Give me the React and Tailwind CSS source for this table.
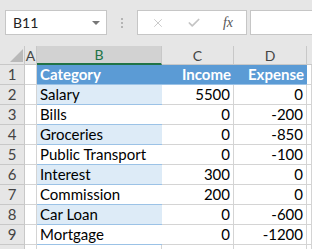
import React from 'react';
import { X, Check } from 'lucide-react';

const rows = [
    { name: 'Salary', income: 5500, expense: 0 },
    { name: 'Bills', income: 0, expense: -200 },
    { name: 'Groceries', income: 0, expense: -850 },
    { name: 'Public Transport', income: 0, expense: -100 },
    { name: 'Interest', income: 300, expense: 0 },
    { name: 'Commission', income: 200, expense: 0 },
    { name: 'Car Loan', income: 0, expense: -600 },
    { name: 'Mortgage', income: 0, expense: -1200 },
];

const cols = 'grid grid-cols-[25px_12px_125px_72px_73px_1fr]';
const cell = 'h-[20px] border-r border-b border-[#d4d4d4] bg-white';
const rowHead = 'h-[20px] border-r border-b border-[#c8c8c8] bg-[#e6e6e6] flex items-center justify-center text-[#444] text-[15px]';
const colHead = 'h-[19px] bg-[#e6e6e6] border-r border-b border-[#c8c8c8] flex items-center justify-center text-[14px] text-[#444]';

function FormulaBar() {
    return (
        <div className="h-[46px] bg-[#e6e6e6] flex items-start pt-[10px] pl-[5px]">
            <div className="w-[102px] h-[25px] bg-white border border-[#c6c6c6] flex items-center justify-between pl-[7px] pr-[6px]">
                <span className="text-[14px] text-[#222]">B11</span>
                <span className="w-0 h-0 border-l-[4px] border-r-[4px] border-t-[4px] border-l-transparent border-r-transparent border-t-[#777]"></span>
            </div>
            <div className="w-[30px] h-[25px] flex flex-col items-center justify-center gap-[2px]">
                <span className="w-[2px] h-[2px] bg-[#b4b4b4]"></span>
                <span className="w-[2px] h-[2px] bg-[#b4b4b4]"></span>
                <span className="w-[2px] h-[2px] bg-[#b4b4b4]"></span>
            </div>
            <div className="w-[110px] h-[25px] bg-white border border-[#c6c6c6] flex items-center justify-between pl-[13px] pr-[13px]">
                <X className="w-[14px] h-[14px] text-[#c4c4c4]" strokeWidth={1.5} />
                <Check className="w-[14px] h-[14px] text-[#c4c4c4]" strokeWidth={3} />
                <span className="text-[14px] italic text-[#555] font-['Liberation_Serif',serif] leading-none">fx</span>
            </div>
            <div className="ml-[3px] flex-1 h-[25px] bg-white border border-[#c6c6c6] border-r-0"></div>
        </div>
    );
}

function App() {
    return (
        <div className="w-[312px] h-[249px] overflow-hidden bg-[#e6e6e6] font-['Lato','Liberation_Sans',sans-serif]">
            <FormulaBar />
            <div className={cols}>
                {/* select-all corner */}
                <div className="h-[19px] bg-[#e6e6e6] border-r border-b border-[#c8c8c8] flex items-end justify-end pr-[1px] pb-[2px]">
                    <svg width="13" height="13" viewBox="0 0 13 13">
                        <polygon points="0,13 13,13 13,0" fill="#b9b9b9" />
                    </svg>
                </div>
                <div className={colHead}>A</div>
                <div className="h-[19px] bg-[#d2d2d2] border-r border-[#c8c8c8] border-b-2 border-b-[#217346] flex items-center justify-center text-[14px] text-[#217346]">B</div>
                <div className={colHead}>C</div>
                <div className={colHead}>D</div>
                <div className="h-[19px] bg-[#e6e6e6] border-b border-[#c8c8c8]"></div>

                <div className={rowHead}>1</div>
                <div className={cell}></div>
                <div className="h-[20px] bg-[#5b9bd5] border-b border-[#9bc2e6] flex items-center pl-[3px] text-white font-bold text-[15px]">Category</div>
                <div className="h-[20px] bg-[#5b9bd5] border-b border-[#9bc2e6] flex items-center justify-end pr-[3px] text-white font-bold text-[15px]">Income</div>
                <div className="h-[20px] bg-[#5b9bd5] border-b border-[#9bc2e6] flex items-center justify-end pr-[3px] text-white font-bold text-[15px]">Expense</div>
                <div className={cell}></div>

                {rows.map((r, i) => (
                    <React.Fragment key={r.name}>
                        <div className={rowHead}>{i + 2}</div>
                        <div className={cell}></div>
                        <div className={`h-[20px] border-b border-[#9bc2e6] flex items-center pl-[3px] text-[15px] text-black ${i % 2 === 0 ? 'bg-[#ddebf7]' : 'bg-white'}`}>{r.name}</div>
                        <div className={`${cell} flex items-center justify-end pr-[3px] text-[15px] text-black`}>{r.income}</div>
                        <div className={`${cell} flex items-center justify-end pr-[3px] text-[15px] text-black`}>{r.expense}</div>
                        <div className={cell}></div>
                    </React.Fragment>
                ))}

                {/* row 10, only its top edge shows */}
                <div className={rowHead}></div>
                <div className={cell}></div>
                <div className={cell}></div>
                <div className={cell}></div>
                <div className={cell}></div>
                <div className={cell}></div>
            </div>
        </div>
    );
}

export default App;
